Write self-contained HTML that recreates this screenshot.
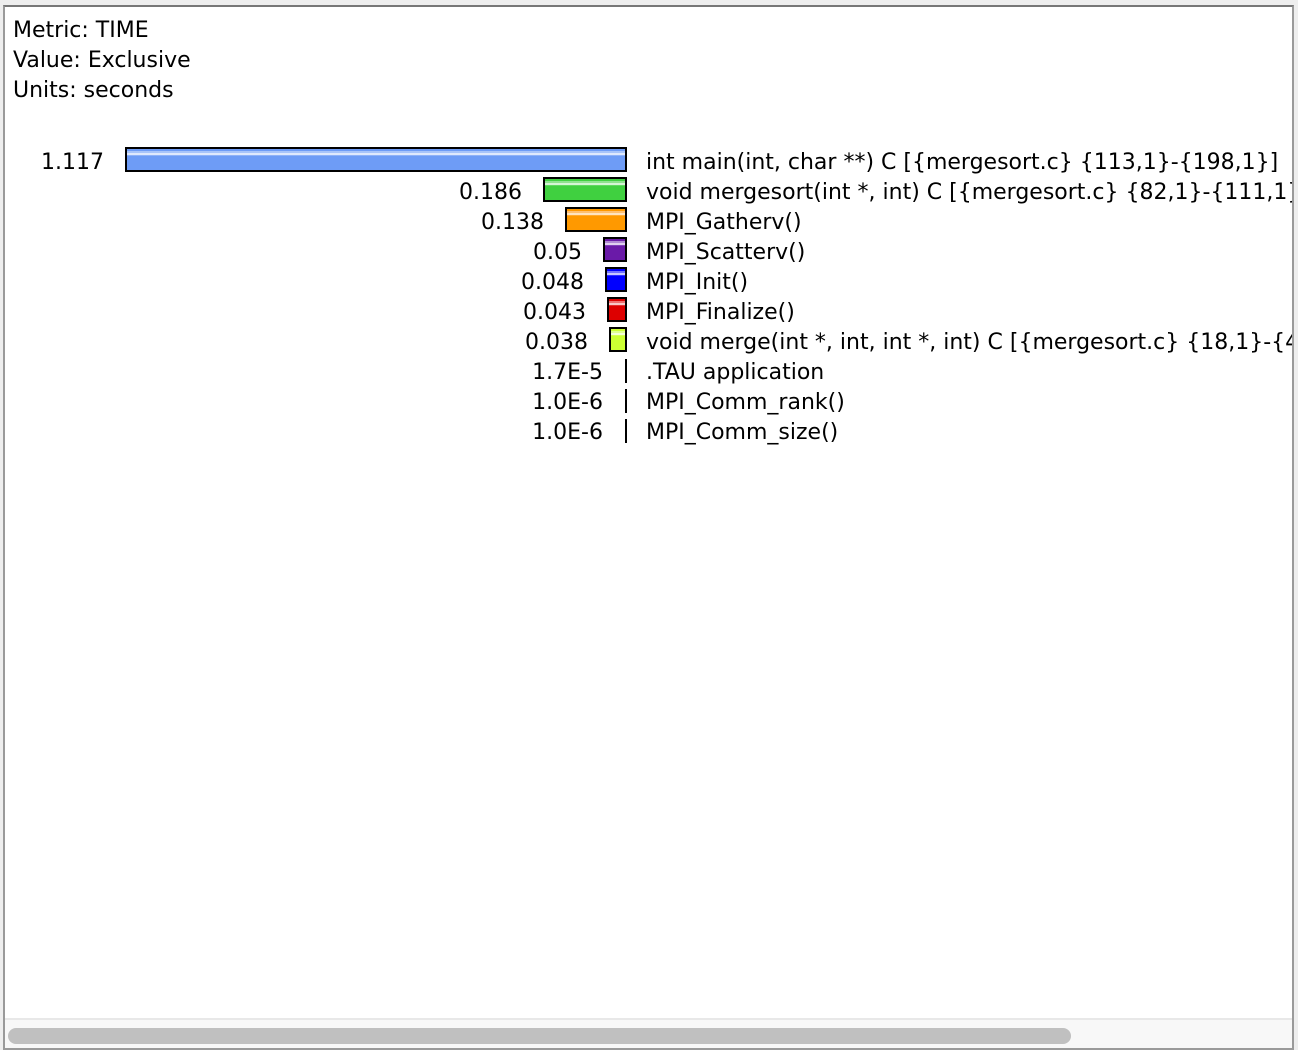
<!DOCTYPE html>
<html><head><meta charset="utf-8"><style>
html,body{margin:0;padding:0;width:1298px;height:1050px;background:#eeeeee;overflow:hidden}
#p{position:absolute;left:3px;top:5px;width:1287px;height:1041px;background:#fff;border:2px solid #9a9a9a;border-top-color:#777;overflow:hidden;font-family:"DejaVu Sans","Liberation Sans",sans-serif;font-size:22px;color:#000}
.t{position:absolute;white-space:nowrap;line-height:30px;margin-top:1px}
.n{position:absolute;white-space:nowrap;line-height:30px;text-align:right;width:200px;margin-top:1px}
.b{position:absolute;height:25px;box-sizing:border-box;border:2px solid #000}
.l{position:absolute;left:620px;width:2px;height:24px;background:#000}
#sb{position:absolute;left:0;top:1011px;width:1287px;height:30px;background:#f8f8f8;border-top:2px solid #e8e8e8}
#th{position:absolute;left:3px;top:8px;width:1063px;height:16px;border-radius:8px;background:#c0c0c0}
</style></head><body><div id="p">
<div class="t" style="left:8px;top:8px">Metric: TIME</div>
<div class="t" style="left:8px;top:38px">Value: Exclusive</div>
<div class="t" style="left:8px;top:68px">Units: seconds</div>
<div class="n" style="left:-101px;top:140px">1.117</div>
<div class="b" style="left:120px;top:140px;width:502px;background:linear-gradient(#6e9cf6 0 2px,#a9c5fa 2px 4px,#dfe9fd 4px 6px,#8fb2f8 6px 7px,#6e9cf6 7px)"></div>
<div class="t" style="left:641px;top:140px">int main(int, char **) C [{mergesort.c} {113,1}-{198,1}]</div>
<div class="n" style="left:317px;top:170px">0.186</div>
<div class="b" style="left:538px;top:170px;width:84px;background:linear-gradient(#40d040 0 2px,#8fe28f 2px 4px,#d5f5d5 4px 6px,#60d860 6px 7px,#40d040 7px)"></div>
<div class="t" style="left:641px;top:170px">void mergesort(int *, int) C [{mergesort.c} {82,1}-{111,1}]</div>
<div class="n" style="left:339px;top:200px">0.138</div>
<div class="b" style="left:560px;top:200px;width:62px;background:linear-gradient(#ff9900 0 2px,#ffc070 2px 4px,#ffe4c0 4px 6px,#ffaa30 6px 7px,#ff9900 7px)"></div>
<div class="t" style="left:641px;top:200px">MPI_Gatherv()</div>
<div class="n" style="left:377px;top:230px">0.05</div>
<div class="b" style="left:598px;top:230px;width:24px;background:linear-gradient(#6a1aa8 0 2px,#b08ad4 2px 4px,#e0d0f0 4px 6px,#8040b8 6px 7px,#6a1aa8 7px)"></div>
<div class="t" style="left:641px;top:230px">MPI_Scatterv()</div>
<div class="n" style="left:379px;top:260px">0.048</div>
<div class="b" style="left:600px;top:260px;width:22px;background:linear-gradient(#0000ff 0 2px,#7070ff 2px 4px,#c8c8ff 4px 6px,#3030ff 6px 7px,#0000ff 7px)"></div>
<div class="t" style="left:641px;top:260px">MPI_Init()</div>
<div class="n" style="left:381px;top:290px">0.043</div>
<div class="b" style="left:602px;top:290px;width:20px;background:linear-gradient(#dd0000 0 2px,#ee7070 2px 4px,#f8c8c8 4px 6px,#e03030 6px 7px,#dd0000 7px)"></div>
<div class="t" style="left:641px;top:290px">MPI_Finalize()</div>
<div class="n" style="left:383px;top:320px">0.038</div>
<div class="b" style="left:604px;top:320px;width:18px;background:linear-gradient(#ccff33 0 2px,#e0ff90 2px 4px,#f4ffd8 4px 6px,#d4ff55 6px 7px,#ccff33 7px)"></div>
<div class="t" style="left:641px;top:320px">void merge(int *, int, int *, int) C [{mergesort.c} {18,1}-{44,1}]</div>
<div class="n" style="left:398px;top:350px">1.7E-5</div><div class="l" style="top:352px"></div>
<div class="t" style="left:641px;top:350px">.TAU application</div>
<div class="n" style="left:398px;top:380px">1.0E-6</div><div class="l" style="top:382px"></div>
<div class="t" style="left:641px;top:380px">MPI_Comm_rank()</div>
<div class="n" style="left:398px;top:410px">1.0E-6</div><div class="l" style="top:412px"></div>
<div class="t" style="left:641px;top:410px">MPI_Comm_size()</div>
<div id="sb"><div id="th"></div></div>
</div></body></html>
